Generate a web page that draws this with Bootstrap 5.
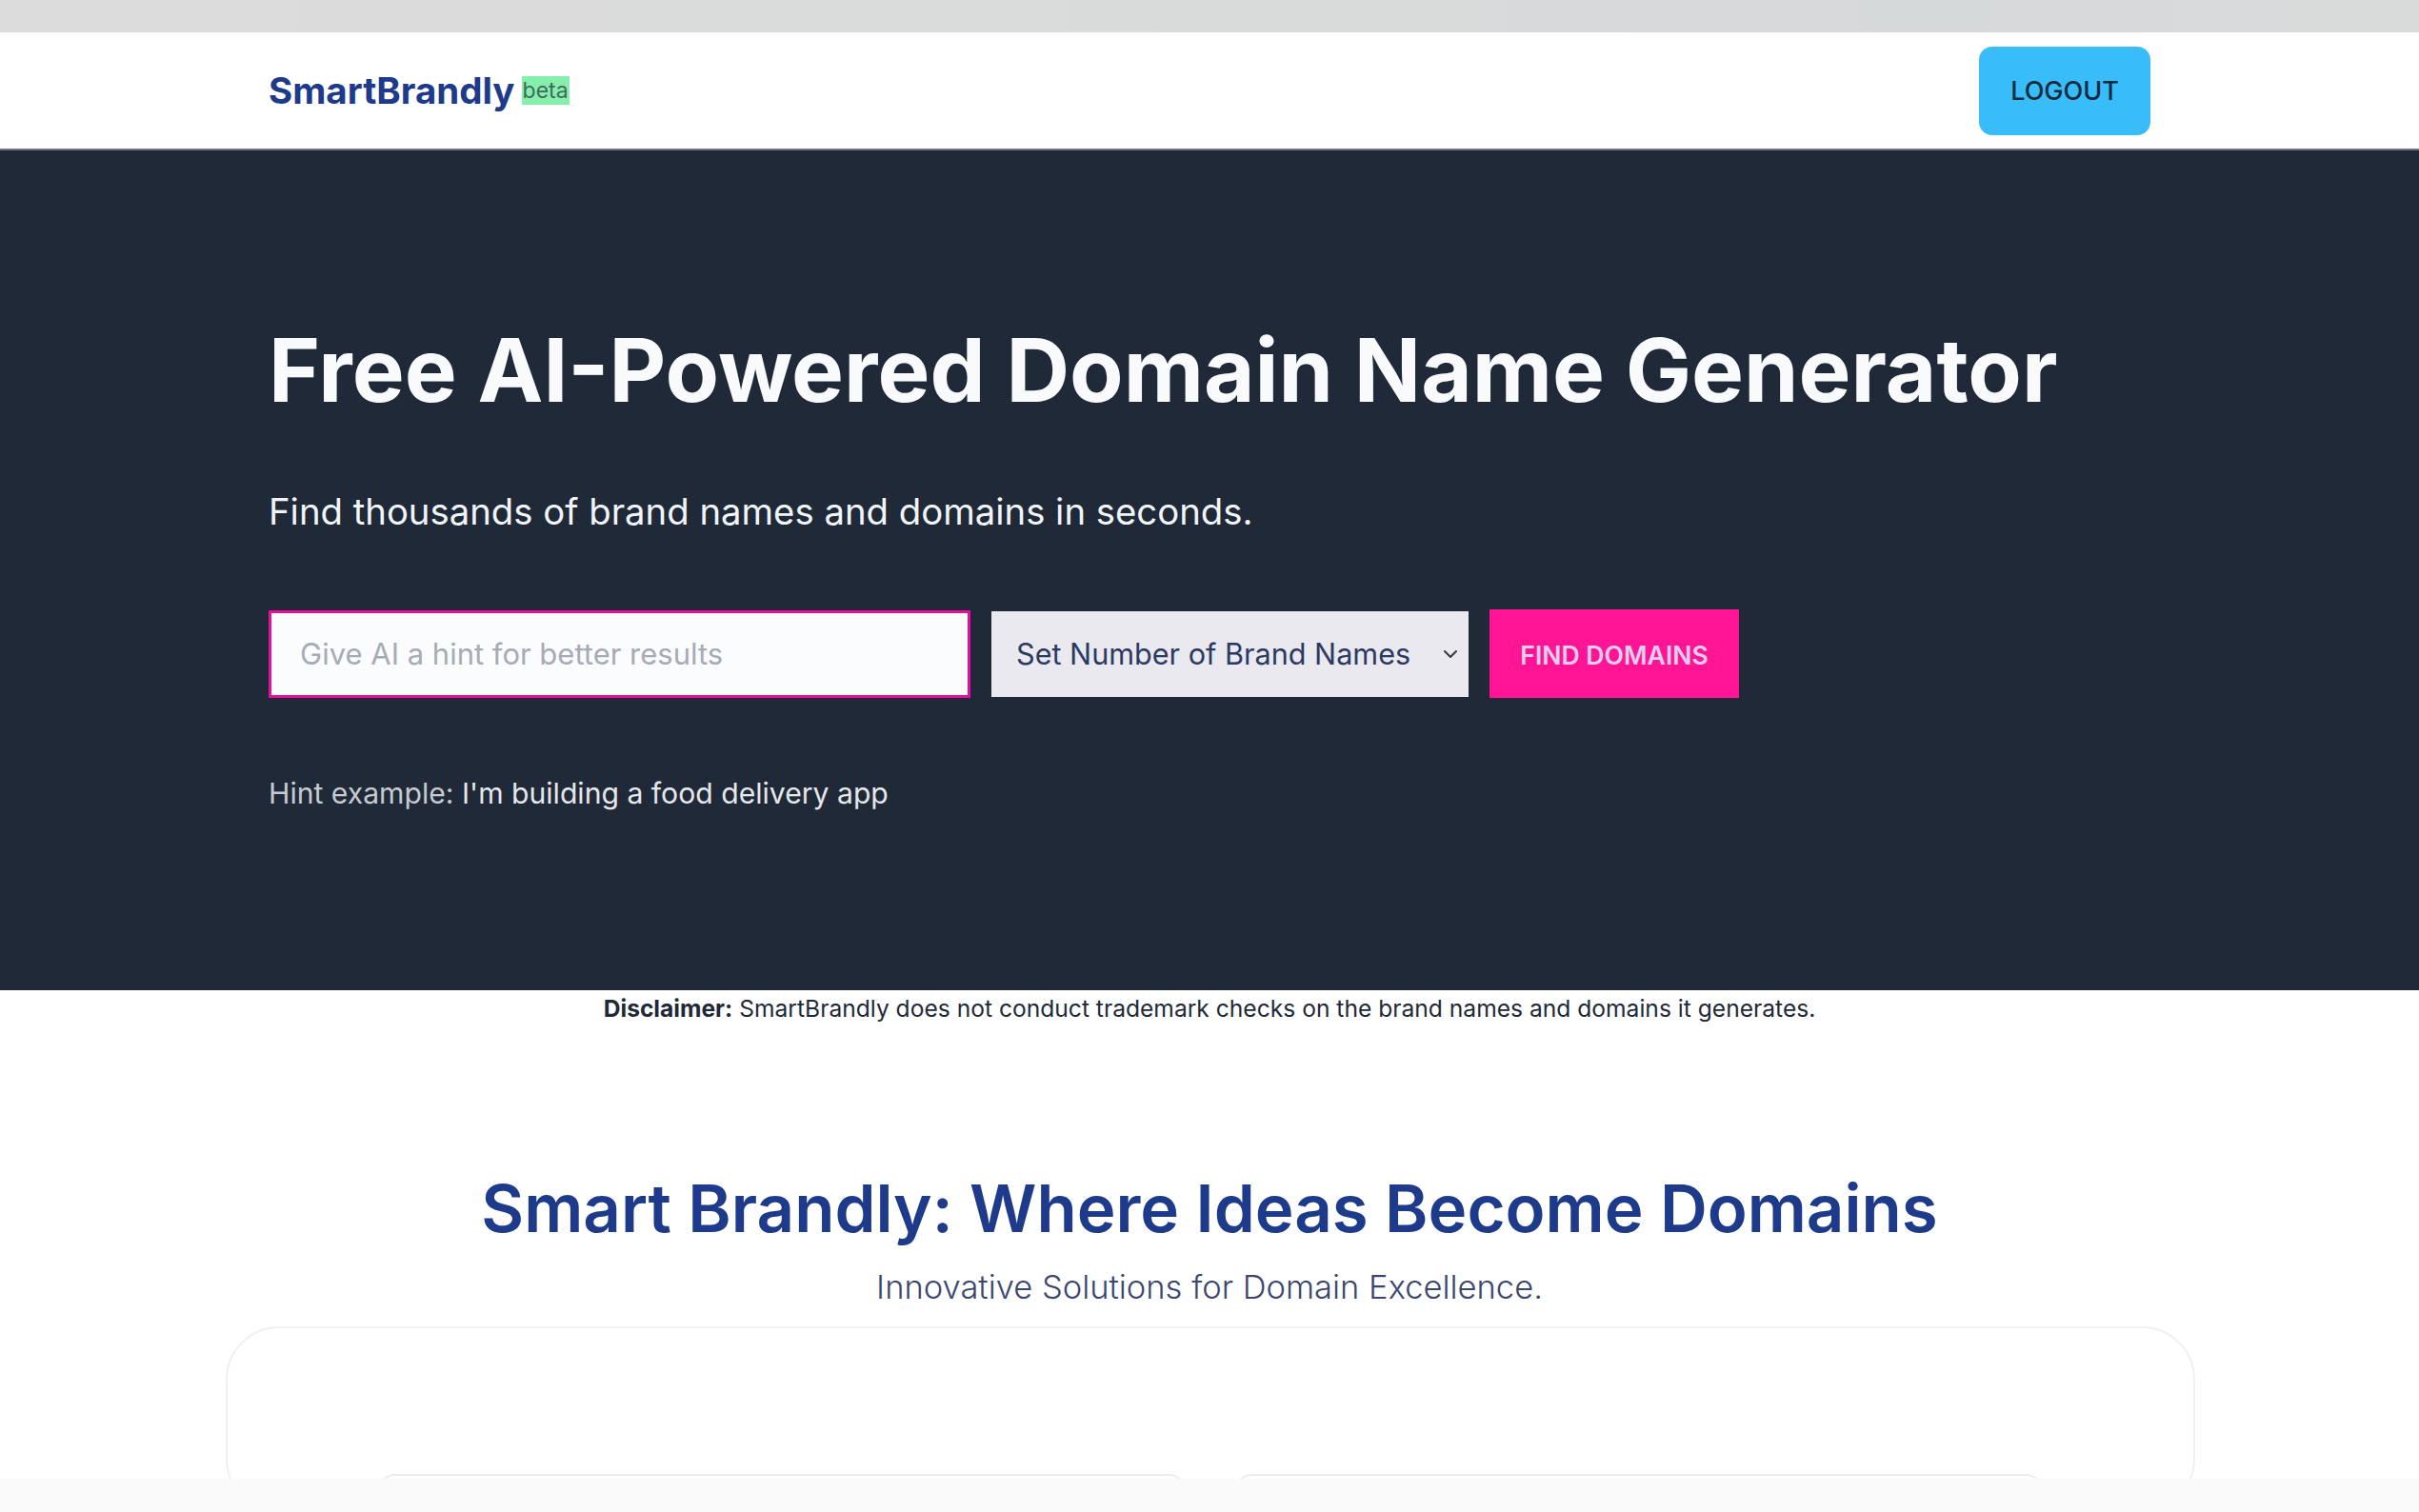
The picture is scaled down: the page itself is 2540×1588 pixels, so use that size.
<!doctype html>
<html lang="en">
<head>
<meta charset="utf-8">
<title>SmartBrandly</title>
<link href="https://cdn.jsdelivr.net/npm/bootstrap@5.3.0/dist/css/bootstrap.min.css" rel="stylesheet">
<style>
html,body{height:1588px;overflow:hidden;}
body{font-family:Inter,"Liberation Sans",sans-serif;color:#1f2937;background:#fff;position:relative;}
.sb-topstrip{height:34px;background:linear-gradient(90deg,#dcdcdc,#dadbdb 40%,#d6d9da 80%,#d9dbdb);}
.sb-nav{height:124px;padding:0 282px;border-bottom:2px solid #6f7680;background:#fff;}
.sb-brand{font-size:38.5px;font-weight:700;color:#1e3a8a;padding:0;margin:0;line-height:1;}
.sb-beta{font-size:23px;font-weight:400;color:#3f6b5c;background:#86efac;margin-left:7px;padding:0 1px;line-height:30px;height:30px;letter-spacing:0;}
.sb-logout{width:180px;height:93px;background:#38bdf8;border:0;border-radius:14px;color:#0f2a3f;font-size:27px;font-weight:500;padding:3px 0 0;}
.sb-hero{height:882px;background:#1f2937;padding:180px 282px 0;}
.sb-title{font-size:92.3px;font-weight:700;line-height:1.1;color:#f8fafc;margin:0 0 75px;white-space:nowrap;}
.sb-sub{font-size:38.3px;line-height:1.2;color:#f1f5f9;margin:0 0 80px;}
.sb-form{gap:22px;}
.sb-input{width:737px;height:92px;flex:none;border:3px solid #e5109c;border-radius:0;background:#fbfcfe;font-size:31px;padding:0 30px;}
.sb-input::placeholder{color:#a6abb5;opacity:1;}
.sb-select{width:501px;height:90px;flex:none;border:0;border-radius:0;background-color:#e9e9ef;color:#2c3a63;font-size:30.6px;padding:0 26px;background-position:right 8px center;background-size:22px 16px;}
.sb-find{width:262px;height:93px;flex:none;border:0;border-radius:0;background:#ff1493;color:#e3cdee;font-size:26.6px;font-weight:600;padding:3px 0 0;}
.sb-hint{font-size:30.15px;color:#c6cad1;margin:82px 0 0;line-height:1.2;}
.sb-hint span{color:#e5e7eb;}
.sb-disc{font-size:24.6px;line-height:1;text-align:center;margin:7px 0 0;color:#1f2937;}
.sb-disc strong{font-weight:700;}
.sb-h2{font-size:69px;font-weight:600;color:#1e3a8a;line-height:1.2;text-align:center;margin:156px 0 0;}
.sb-tag{font-size:34.5px;font-weight:300;color:#3b4670;text-align:center;line-height:1.2;margin:21px 0 0;}
.sb-outer{margin:20px 235px 0 237px;height:195px;border:2px solid #f0f0f0;border-radius:56px;background:#fff;padding:153px 157px 0;}
.sb-inner{height:38px;border:2px solid #ececec;border-radius:24px;flex:1;}
.sb-innerrow{gap:50px;}
.sb-bottom{position:absolute;left:0;right:0;bottom:0;height:35px;background:#fafafa;}
</style>
</head>
<body>
<div class="sb-topstrip"></div>
<nav class="navbar sb-nav d-flex justify-content-between align-items-center flex-nowrap">
  <a class="navbar-brand sb-brand d-flex align-items-center" href="#">SmartBrandly<span class="sb-beta">beta</span></a>
  <button class="btn sb-logout" type="button">LOGOUT</button>
</nav>
<section class="sb-hero">
  <h1 class="sb-title">Free AI-Powered Domain Name Generator</h1>
  <p class="sb-sub">Find thousands of brand names and domains in seconds.</p>
  <form class="d-flex align-items-center sb-form">
    <input class="form-control sb-input" type="text" placeholder="Give AI a hint for better results">
    <select class="form-select sb-select"><option>Set Number of Brand Names</option></select>
    <button class="btn sb-find" type="button">FIND DOMAINS</button>
  </form>
  <p class="sb-hint">Hint example: <span>I'm building a food delivery app</span></p>
</section>
<p class="sb-disc"><strong>Disclaimer:</strong> SmartBrandly does not conduct trademark checks on the brand names and domains it generates.</p>
<h2 class="sb-h2">Smart Brandly: Where Ideas Become Domains</h2>
<p class="sb-tag">Innovative Solutions for Domain Excellence.</p>
<div class="card sb-outer">
  <div class="d-flex sb-innerrow">
    <div class="card sb-inner"></div>
    <div class="card sb-inner"></div>
  </div>
</div>
<div class="sb-bottom"></div>
<script src="https://cdn.jsdelivr.net/npm/bootstrap@5.3.0/dist/js/bootstrap.bundle.min.js"></script>
</body>
</html>
